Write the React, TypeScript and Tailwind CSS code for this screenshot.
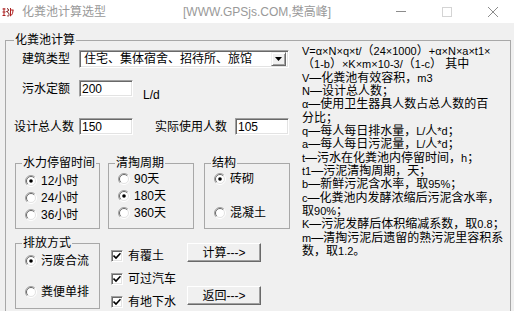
import React from "react"

function Radio({ checked }: { checked?: boolean }) {
  return (
    <svg width="12" height="12" viewBox="0 0 12 12" className="shrink-0">
      <circle cx="6" cy="6" r="5" fill="#fff" />
      <path d="M2.1 9.9A5.5 5.5 0 0 1 9.9 2.1" fill="none" stroke="#a0a0a0" strokeWidth="1" />
      <path d="M9.9 2.1A5.5 5.5 0 0 1 2.1 9.9" fill="none" stroke="#ffffff" strokeWidth="1" />
      <path d="M2.8 9.2A4.5 4.5 0 0 1 9.2 2.8" fill="none" stroke="#696969" strokeWidth="1" />
      <path d="M9.2 2.8A4.5 4.5 0 0 1 2.8 9.2" fill="none" stroke="#e3e3e3" strokeWidth="1" />
      {checked && <circle cx="6" cy="6" r="1.8" fill="#000" />}
    </svg>
  )
}

function Check() {
  return (
    <span className="w-[12px] h-[12px] shrink-0 bg-white border border-t-[#a0a0a0] border-l-[#a0a0a0] border-r-white border-b-white shadow-[inset_1px_1px_0_#696969,inset_-1px_-1px_0_#e3e3e3] flex items-center justify-center">
      <svg width="8" height="8" viewBox="0 0 8 8">
        <path d="M0.5 3.5L3 6L7.5 1.2" fill="none" stroke="#000" strokeWidth="1.6" />
      </svg>
    </span>
  )
}

function Field({ value, w }: { value: string; w: string }) {
  return (
    <div
      className={`${w} h-[17px] bg-white border border-t-[#a0a0a0] border-l-[#a0a0a0] border-r-white border-b-white shadow-[inset_1px_1px_0_#696969,inset_-1px_-1px_0_#e3e3e3] pl-[2px] flex items-center`}
    >
      {value}
    </div>
  )
}

function Group({
  title,
  w,
  children,
}: {
  title: string
  w: string
  children: React.ReactNode
}) {
  return (
    <fieldset className={`${w} h-[73px] border border-[#a8a8a8]`}>
      <legend className="ml-[6px] px-[1px] leading-[14px]">{title}</legend>
      {children}
    </fieldset>
  )
}

function Opt({ label, checked }: { label: string; checked?: boolean }) {
  return (
    <div className="h-[17px] flex items-center pl-[9px] gap-[4px]">
      <Radio checked={checked} />
      <span>{label}</span>
    </div>
  )
}

function Btn({ label }: { label: string }) {
  return (
    <div className="w-[74px] h-[19px] bg-[#f0f0f0] border border-t-white border-l-white border-r-[#696969] border-b-[#696969] shadow-[inset_-1px_-1px_0_#a0a0a0] flex items-center justify-center">
      {label}
    </div>
  )
}

const notes = [
  "V=α×N×q×t/（24×1000）+α×N×a×t1×",
  "（1-b）×K×m×10-3/（1-c） 其中",
  "V—化粪池有效容积，m3",
  "N—设计总人数；",
  "α—使用卫生器具人数占总人数的百",
  "分比；",
  "q—每人每日排水量，L/人*d；",
  "a—每人每日污泥量，L/人*d；",
  "t—污水在化粪池内停留时间，h；",
  "t1—污泥清掏周期，天；",
  "b—新鲜污泥含水率，取95%；",
  "c—化粪池内发酵浓缩后污泥含水率，",
  "取90%；",
  "K—污泥发酵后体积缩减系数，取0.8；",
  "m—清掏污泥后遗留的熟污泥里容积系",
  "数，取1.2。",
]

// latin runs are a bit narrower than the CJK ones in the original
function NoteLine({ text }: { text: string }) {
  const parts = text.split(/([^\u3000-\u9fff\uff00-\uffef—]+)/)
  return (
    <div>
      {parts.map((p, i) =>
        i % 2 === 1 ? (
          <span key={i} className="text-[11px]">{p}</span>
        ) : (
          <span key={i}>{p}</span>
        )
      )}
    </div>
  )
}

export default function App() {
  return (
    <div className="w-[514px] h-[311px] overflow-hidden bg-[#f0f0f0] text-black text-[12px] leading-[14px] font-['Liberation_Sans','Noto_Sans_CJK_SC',sans-serif]">

      {/* Title bar */}

      <div className="h-[23px] bg-white flex items-center text-[#999999]">
        <svg width="12" height="10" viewBox="0 0 12 10" className="ml-[2px]">
          <path d="M0.5 2h3M0.5 5h3M2 1v8M0.5 8.5h3" stroke="#b02020" strokeWidth="1" fill="none" />
          <path d="M5 1.5c2 0 2 3 0 3s2 0 2 3-2 1-2 1" stroke="#802020" strokeWidth="1" fill="none" />
          <path d="M8.5 1v8M8 3h3.5M11 3c0 3-1 5-2.5 6" stroke="#b02020" strokeWidth="1" fill="none" />
        </svg>
        <span className="ml-[8px] w-[161px]">化粪池计算选型</span>
        <span>[WWW.GPSjs.COM,樊高峰]</span>
        <div className="ml-auto flex h-full mr-[-2px]">
          <div className="w-[46px] flex items-center justify-center">
            <div className="w-[10px] h-px bg-[#8c8c8c]" />
          </div>
          <div className="w-[46px] flex items-center justify-center">
            <div className="w-[10px] h-[10px] border border-[#d4d4d4]" />
          </div>
          <div className="w-[46px] flex items-center justify-center">
            <svg width="10" height="10" viewBox="0 0 10 10">
              <path d="M0 0L10 10M10 0L0 10" stroke="#8c8c8c" strokeWidth="1" />
            </svg>
          </div>
        </div>
      </div>

      {/* Body */}

      <div className="pt-[10px] pl-[5px] pr-[3px]">
        <fieldset className="h-[300px] border border-[#a8a8a8] pl-[8px]">
          <legend className="px-[1px] leading-[14px]">化粪池计算</legend>

          <div className="flex">

            {/* Inputs */}

            <div className="w-[275px] shrink-0">

              <div className="mt-[3px] h-[18px] flex items-center">
                <span className="w-[65px] pl-[8px]">建筑类型</span>
                <div className="w-[210px] h-[18px] bg-white border border-t-[#a0a0a0] border-l-[#a0a0a0] border-r-white border-b-white shadow-[inset_1px_1px_0_#696969,inset_-1px_-1px_0_#e3e3e3] flex items-center pl-[4px] pr-[2px]">
                  <span className="flex-1">住宅、集体宿舍、招待所、旅馆</span>
                  <div className="w-[15px] h-[14px] bg-[#f0f0f0] border border-t-[#f0f0f0] border-l-[#f0f0f0] border-r-[#696969] border-b-[#696969] shadow-[inset_1px_1px_0_#fff,inset_-1px_-1px_0_#a0a0a0] flex items-center justify-center">
                    <svg width="7" height="4" viewBox="0 0 7 4">
                      <path d="M0 0h7L3.5 4z" fill="#000" />
                    </svg>
                  </div>
                </div>
              </div>

              <div className="mt-[12px] flex items-start">
                <span className="w-[65px] pl-[8px] h-[17px] flex items-center">污水定额</span>
                <Field value="200" w="w-[54px]" />
                <span className="ml-[10px] mt-[8px]">L/d</span>
              </div>

              <div className="mt-[16px] flex items-center">
                <span className="w-[65px]">设计总人数</span>
                <Field value="150" w="w-[54px]" />
                <span className="ml-[22px]">实际使用人数</span>
                <div className="ml-[8px]">
                  <Field value="105" w="w-[54px]" />
                </div>
              </div>

              <div className="mt-[21px] flex">
                <div className="ml-[1px]">
                  <Group title="水力停留时间" w="w-[85px]">
                    <div className="pt-[2px]">
                      <Opt label="12小时" checked />
                      <Opt label="24小时" />
                      <Opt label="36小时" />
                    </div>
                  </Group>
                </div>
                <div className="ml-[8px]">
                  <Group title="清掏周期" w="w-[86px]">
                    <Opt label="90天" />
                    <Opt label="180天" checked />
                    <Opt label="360天" />
                  </Group>
                </div>
                <div className="ml-[10px]">
                  <Group title="结构" w="w-[86px]">
                    <Opt label="砖砌" checked />
                    <div className="mt-[17px]">
                      <Opt label="混凝土" />
                    </div>
                  </Group>
                </div>
              </div>

              <div className="mt-[7px] flex">
                <div className="ml-[1px]">
                  <Group title="排放方式" w="w-[85px]">
                    <div className="pt-[2px]">
                      <Opt label="污废合流" checked />
                      <div className="mt-[14px]">
                        <Opt label="粪便单排" />
                      </div>
                    </div>
                  </Group>
                </div>
                <div className="ml-[11px] w-[76px] pt-[11px] flex flex-col gap-[6px]">
                  <div className="h-[17px] flex items-center gap-[5px]"><Check />有覆土</div>
                  <div className="h-[17px] flex items-center gap-[5px]"><Check />可过汽车</div>
                  <div className="h-[17px] flex items-center gap-[5px]"><Check />有地下水</div>
                </div>
                <div className="pt-[7px] flex flex-col gap-[24px]">
                  <Btn label="计算--->" />
                  <Btn label="返回--->" />
                </div>
              </div>

            </div>

            {/* Notes */}

            <div className="ml-[13px] -mt-[2px] leading-[13.33px] whitespace-nowrap">
              {notes.map((line) => (
                <NoteLine key={line} text={line} />
              ))}
            </div>

          </div>
        </fieldset>
      </div>

    </div>
  )
}
